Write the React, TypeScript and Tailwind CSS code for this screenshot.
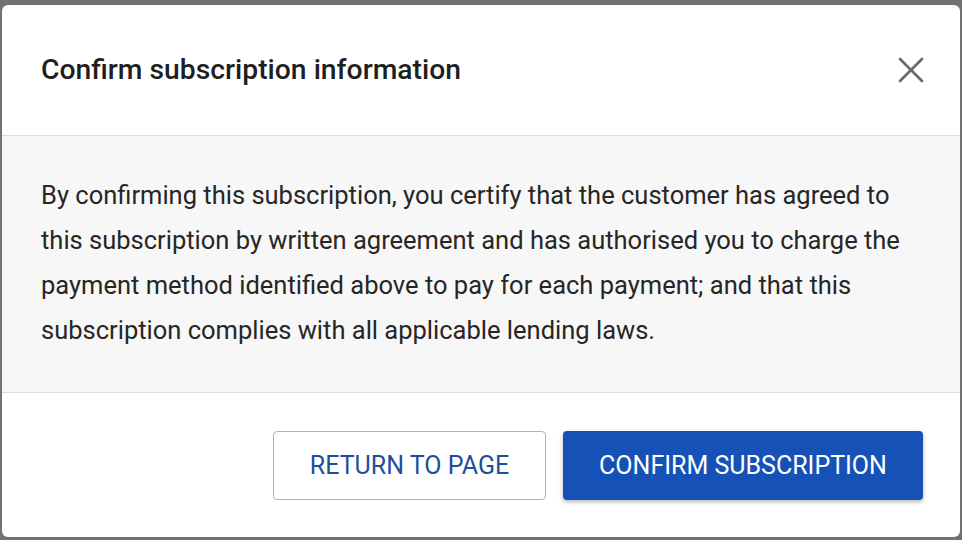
import { X } from 'lucide-react';

export default function App() {
  return (
    <div className="h-[540px] w-[962px] overflow-hidden bg-[#727272] pl-[2px] pt-[5px] font-['Roboto',sans-serif]">
      <div className="flex h-[532px] w-[958px] flex-col overflow-hidden rounded-md bg-white">
        {/* Header */}
        <div className="flex h-[131px] shrink-0 items-center justify-between border-b border-[#dcdcdc] pl-[39px] pr-[27px]">
          <h2 className="text-[28.3px] font-medium text-[#1f1f1f]">Confirm subscription information</h2>
          <button className="text-[#6b6b6b]">
            <X className="h-[44px] w-[44px]" strokeWidth={1.5} />
          </button>
        </div>

        {/* Body */}
        <div className="flex h-[257px] shrink-0 items-center border-b border-[#dcdcdc] bg-[#f7f7f7] pl-[39px] pr-[56px] pb-[2px]">
          <p className="text-[25.5px] leading-[45px] text-[#262626]">
            By confirming this subscription, you certify that the customer has agreed to this subscription by
            written agreement and has authorised you to charge the payment method identified above to pay for each
            payment; and that this subscription complies with all applicable lending laws.
          </p>
        </div>

        {/* Footer */}
        <div className="flex flex-1 items-start justify-end gap-[17px] pr-[37px] pt-[38px]">
          <button className="h-[69px] w-[273px] rounded-[4px] border border-[#a9b4c2] bg-white text-[25px] text-[#1c4f9e]">
            RETURN TO PAGE
          </button>
          <button className="h-[69px] w-[360px] rounded-[4px] bg-[#1651b8] text-[25px] text-white shadow-[0_2px_4px_rgba(0,0,0,0.3)]">
            CONFIRM SUBSCRIPTION
          </button>
        </div>
      </div>
    </div>
  );
}
